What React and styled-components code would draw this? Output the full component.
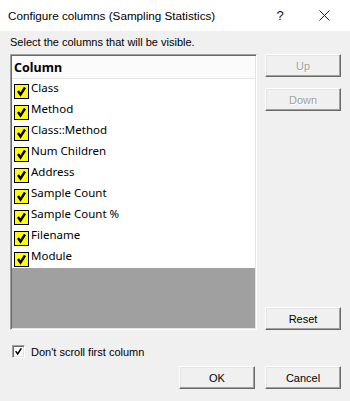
import React from "react";
import styled, { createGlobalStyle } from "styled-components";

const Global = createGlobalStyle`
  html, body { margin: 0; padding: 0; background: #f0f0f0; }
  body { font-family: "Liberation Sans", Arial, sans-serif; }
`;

const Window = styled.div`
  width: 350px;
  height: 401px;
  display: flex;
  flex-direction: column;
  background: #f0f0f0;
  overflow: hidden;
`;

const TitleBar = styled.header`
  height: 31px;
  flex: none;
  display: flex;
  align-items: center;
  background: #fff;
  padding-left: 8px;
  padding-right: 4px;
  font-family: "Liberation Sans", Arial, sans-serif;
  font-size: 11.7px;
  color: #000;
`;

const Title = styled.span`
  flex: 1;
`;

const TitleButton = styled.span`
  width: 44px;
  display: flex;
  justify-content: center;
  font-size: 13px;
  color: #111;
`;

const Body = styled.main`
  flex: 1;
  display: flex;
  flex-direction: column;
  padding: 5px 9px 0 10px;
`;

const Prompt = styled.p`
  margin: 0 0 5px;
  font-size: 11px;
  line-height: 13px;
  color: #000;
`;

const Middle = styled.div`
  display: flex;
  gap: 8px;
`;

const List = styled.div`
  width: 247px;
  height: 276px;
  box-sizing: border-box;
  border-top: 1px solid #a0a0a0;
  border-left: 1px solid #a0a0a0;
  border-right: 1px solid #fff;
  border-bottom: 1px solid #fff;
  box-shadow: inset 1px 1px 0 #696969, inset -1px -1px 0 #e3e3e3;
  padding: 1px;
  display: flex;
  flex-direction: column;
  background: #a0a0a0;
`;

const ListHeader = styled.div`
  height: 22px;
  flex: none;
  display: flex;
  align-items: center;
  padding-left: 2px;
  background: #fbfbfb;
  border-bottom: 1px solid #e5e5e5;
  font-family: "Noto Sans", sans-serif;
  font-weight: 700;
  font-size: 12.5px;
  color: #000;
`;

const Row = styled.div`
  height: 21px;
  flex: none;
  display: flex;
  align-items: center;
  gap: 2px;
  padding-left: 2px;
  background: #fff;
  font-family: "Noto Sans", sans-serif;
  font-size: 11.5px;
  color: #000;
`;

const YellowBox = styled.span`
  width: 13px;
  height: 13px;
  margin-top: 3px;
  border: 1px solid #000;
  background: #ffff00;
  display: flex;
  align-items: center;
  justify-content: center;
`;

const Label = styled.span`
  position: relative;
  top: -2px;
`;

const Side = styled.div`
  display: flex;
  flex-direction: column;
  gap: 11px;
`;

const Button = styled.button`
  width: 76px;
  height: 23px;
  box-sizing: border-box;
  padding: 0;
  background: #f0f0f0;
  border-top: 1px solid #fff;
  border-left: 1px solid #fff;
  border-right: 1px solid #696969;
  border-bottom: 1px solid #696969;
  box-shadow: inset -1px -1px 0 #a0a0a0, inset 1px 1px 0 #e3e3e3;
  font-family: "Liberation Sans", Arial, sans-serif;
  font-size: 11px;
  color: ${({ disabled }) => (disabled ? "#a0a0a0" : "#000")};
  ${({ disabled }) => disabled && "text-shadow: 1px 1px 0 #fff;"}
`;

const Spacer = styled.div`
  flex: 1;
`;

const CheckRow = styled.label`
  margin-top: 15px;
  display: flex;
  align-items: center;
  gap: 6px;
  padding-left: 2px;
  font-size: 11px;
  color: #000;
`;

const SmallBox = styled.span`
  width: 11px;
  height: 11px;
  background: #fff;
  border-top: 1px solid #a0a0a0;
  border-left: 1px solid #a0a0a0;
  border-right: 1px solid #fff;
  border-bottom: 1px solid #fff;
  box-shadow: inset 1px 1px 0 #696969, inset -1px -1px 0 #e3e3e3;
  display: flex;
  align-items: center;
  justify-content: center;
`;

const Footer = styled.div`
  margin-top: 8px;
  display: flex;
  justify-content: flex-end;
  gap: 10px;
`;

const Tick = ({ size = 11, stroke = 2.4 }) => (
  <svg width={size} height={size} viewBox="0 0 11 11">
    <path d="M2 5 L4.5 8.5 L9 1.5" fill="none" stroke="#000" strokeWidth={stroke} />
  </svg>
);

const CloseIcon = () => (
  <svg width="11" height="11" viewBox="0 0 11 11">
    <path d="M0.5 0.5 L10.5 10.5 M10.5 0.5 L0.5 10.5" stroke="#222" strokeWidth="1" />
  </svg>
);

const columns = [
  "Class",
  "Method",
  "Class::Method",
  "Num Children",
  "Address",
  "Sample Count",
  "Sample Count %",
  "Filename",
  "Module",
];

export default function App() {
  return (
    <Window>
      <Global />
      <TitleBar>
        <Title>Configure columns (Sampling Statistics)</Title>
        <TitleButton>?</TitleButton>
        <TitleButton>
          <CloseIcon />
        </TitleButton>
      </TitleBar>
      <Body>
        <Prompt>Select the columns that will be visible.</Prompt>
        <Middle>
          <List>
            <ListHeader>Column</ListHeader>
            {columns.map((c) => (
              <Row key={c}>
                <YellowBox>
                  <Tick />
                </YellowBox>
                <Label>{c}</Label>
              </Row>
            ))}
          </List>
          <Side>
            <Button disabled>Up</Button>
            <Button disabled>Down</Button>
            <Spacer />
            <Button>Reset</Button>
          </Side>
        </Middle>
        <CheckRow>
          <SmallBox>
            <Tick size={9} stroke={1.8} />
          </SmallBox>
          Don't scroll first column
        </CheckRow>
        <Footer>
          <Button>OK</Button>
          <Button>Cancel</Button>
        </Footer>
      </Body>
    </Window>
  );
}
